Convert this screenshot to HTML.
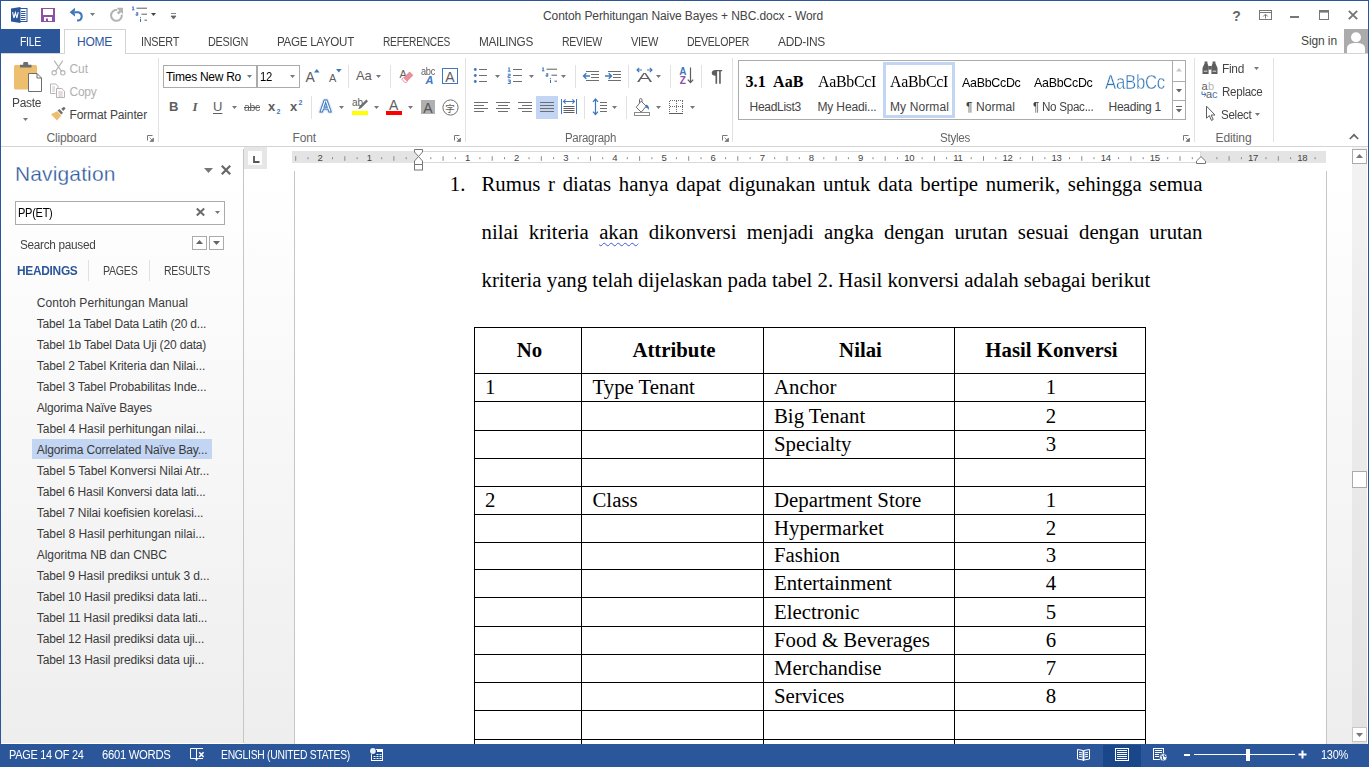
<!DOCTYPE html><html><head><meta charset="utf-8"><title>Contoh Perhitungan Naive Bayes + NBC.docx - Word</title><style>

html,body{margin:0;padding:0;background:#fff;}
body{width:1369px;height:767px;overflow:hidden;font-family:"Liberation Sans",sans-serif;}
#win{position:relative;width:1369px;height:767px;overflow:hidden;background:#fff;}
.a{position:absolute;}
.t{position:absolute;white-space:pre;height:24px;line-height:24px;font-size:12px;}
svg{overflow:visible;}
#doc{position:absolute;left:244px;top:147px;width:1108px;height:597px;overflow:hidden;background:linear-gradient(#ffffff 0px,#ffffff 30px,#eeeeee 596px);}
#page{position:absolute;left:50px;top:24px;width:1031px;height:700px;background:#fff;border-left:1px solid #c8c8c8;border-right:1px solid #c8c8c8;}
.dp{position:absolute;font-family:"Liberation Serif",serif;font-size:20.8px;color:#000;line-height:48px;white-space:nowrap;}
.dt{position:absolute;font-family:"Liberation Serif",serif;font-size:20.8px;color:#000;line-height:30px;height:30px;white-space:nowrap;}
table.tb{position:absolute;border-collapse:collapse;font-family:"Liberation Serif",serif;font-size:20.8px;color:#000;table-layout:fixed;}
table.tb td{border:1px solid #000;padding:0 0 0 10px;height:27.2px;line-height:27px;vertical-align:top;white-space:nowrap;overflow:hidden;}
table.tb td.c{text-align:center;padding:0;}
table.tb tr.h td{height:45px;line-height:45px;font-weight:bold;text-align:center;padding:0;}

</style></head><body><div id="win">
<div class="a" style="left:0px;top:0px;width:1369px;height:1px;background:#2b579a;"></div>
<div class="a" style="left:0px;top:0px;width:1px;height:767px;background:#2b579a;"></div>
<div class="a" style="left:1368px;top:0px;width:1px;height:767px;background:#2b579a;"></div>
<div class="a" style="left:1px;top:29px;width:59px;height:25px;background:#2b579a;"></div>
<div class="a" style="left:1px;top:53px;width:1367px;height:1px;background:#d4d4d4;"></div>
<div class="a" style="left:64px;top:29px;width:62px;height:25px;background:#fff;border:1px solid #d4d4d4;box-sizing:border-box;border-bottom:none;"></div>
<div class="a" style="left:1344px;top:29px;width:24px;height:24px;background:#ababab;"></div>
<div class="a" style="left:1px;top:146px;width:1367px;height:1px;background:#d4d4d4;"></div>
<div class="a" style="left:158px;top:58px;width:1px;height:84px;background:#e1e1e1;"></div>
<div class="a" style="left:465px;top:58px;width:1px;height:84px;background:#e1e1e1;"></div>
<div class="a" style="left:732px;top:58px;width:1px;height:84px;background:#e1e1e1;"></div>
<div class="a" style="left:1194px;top:58px;width:1px;height:84px;background:#e1e1e1;"></div>
<div class="a" style="left:1273px;top:58px;width:1px;height:84px;background:#e1e1e1;"></div>
<div class="a" style="left:163px;top:65px;width:94px;height:23px;background:#fff;border:1px solid #ababab;box-sizing:border-box;"></div>
<div class="a" style="left:257px;top:65px;width:43px;height:23px;background:#fff;border:1px solid #ababab;box-sizing:border-box;"></div>
<div class="a" style="left:348px;top:65px;width:1px;height:23px;background:#e1e1e1;"></div>
<div class="a" style="left:390px;top:65px;width:1px;height:23px;background:#e1e1e1;"></div>
<div class="a" style="left:311px;top:96px;width:1px;height:23px;background:#e1e1e1;"></div>
<div class="a" style="left:575px;top:65px;width:1px;height:23px;background:#e1e1e1;"></div>
<div class="a" style="left:628px;top:65px;width:1px;height:23px;background:#e1e1e1;"></div>
<div class="a" style="left:670px;top:65px;width:1px;height:23px;background:#e1e1e1;"></div>
<div class="a" style="left:701px;top:65px;width:1px;height:23px;background:#e1e1e1;"></div>
<div class="a" style="left:584px;top:96px;width:1px;height:23px;background:#e1e1e1;"></div>
<div class="a" style="left:626px;top:96px;width:1px;height:23px;background:#e1e1e1;"></div>
<div class="a" style="left:536px;top:96px;width:22px;height:23px;background:#c2d5f2;"></div>
<div class="a" style="left:738px;top:60px;width:448px;height:60px;background:#fff;border:1px solid #ababab;box-sizing:border-box;"></div>
<div class="a" style="left:1172px;top:60px;width:14px;height:60px;background:#fff;border:1px solid #ababab;box-sizing:border-box;"></div>
<div class="a" style="left:1172px;top:81px;width:14px;height:1px;background:#ababab;"></div>
<div class="a" style="left:1172px;top:100px;width:14px;height:1px;background:#ababab;"></div>
<div class="a" style="left:883px;top:62px;width:72px;height:56px;border:3px solid #c2d5f2;box-sizing:border-box;"></div>
<div class="a" style="left:1px;top:147px;width:242px;height:596px;background:linear-gradient(#ffffff 0px,#ffffff 30px,#eeeeee 596px);"></div>
<div class="a" style="left:243px;top:149px;width:1px;height:594px;background:#c6c6c6;"></div>
<div class="a" style="left:15px;top:201px;width:210px;height:24px;background:#fff;border:1px solid #ababab;box-sizing:border-box;"></div>
<div class="a" style="left:192px;top:236px;width:15px;height:14px;background:#fff;border:1px solid #ababab;box-sizing:border-box;"></div>
<div class="a" style="left:209px;top:236px;width:15px;height:14px;background:#fff;border:1px solid #ababab;box-sizing:border-box;"></div>
<div class="a" style="left:88px;top:260px;width:1px;height:21px;background:#e1e1e1;"></div>
<div class="a" style="left:149px;top:260px;width:1px;height:21px;background:#e1e1e1;"></div>
<div class="a" style="left:32px;top:439px;width:180px;height:20px;background:#c2d5f2;"></div>
<div id="doc"><div class="a" style="left:-244px;top:-147px;width:1369px;height:767px;"><div class="a" style="left:294px;top:171px;width:1033px;height:600px;background:#fff;border-left:1px solid #c6c6c6;border-right:1px solid #c6c6c6;box-sizing:border-box;"></div><div class="dp" style="left:449.8px;top:160px;">1.</div><div class="dp" style="left:481.5px;top:160px;width:721px;white-space:normal;text-align:justify;">Rumus r diatas hanya dapat digunakan untuk data bertipe numerik, sehingga semua nilai kriteria <span style="text-decoration:underline wavy #3c5ad8 1px;text-underline-offset:3px;">akan</span> dikonversi menjadi angka dengan urutan sesuai dengan urutan kriteria yang telah dijelaskan pada tabel 2. Hasil konversi adalah sebagai berikut</div><div class="a" style="left:474px;top:327px;width:672px;height:1px;background:#000;"></div><div class="a" style="left:474px;top:373px;width:672px;height:1px;background:#000;"></div><div class="a" style="left:474px;top:401px;width:672px;height:1px;background:#000;"></div><div class="a" style="left:474px;top:430px;width:672px;height:1px;background:#000;"></div><div class="a" style="left:474px;top:458px;width:672px;height:1px;background:#000;"></div><div class="a" style="left:474px;top:486px;width:672px;height:1px;background:#000;"></div><div class="a" style="left:474px;top:514px;width:672px;height:1px;background:#000;"></div><div class="a" style="left:474px;top:542px;width:672px;height:1px;background:#000;"></div><div class="a" style="left:474px;top:569px;width:672px;height:1px;background:#000;"></div><div class="a" style="left:474px;top:597px;width:672px;height:1px;background:#000;"></div><div class="a" style="left:474px;top:626px;width:672px;height:1px;background:#000;"></div><div class="a" style="left:474px;top:654px;width:672px;height:1px;background:#000;"></div><div class="a" style="left:474px;top:682px;width:672px;height:1px;background:#000;"></div><div class="a" style="left:474px;top:710px;width:672px;height:1px;background:#000;"></div><div class="a" style="left:474px;top:739px;width:672px;height:1px;background:#000;"></div><div class="a" style="left:474px;top:327px;width:1px;height:440px;background:#000;"></div><div class="a" style="left:581px;top:327px;width:1px;height:440px;background:#000;"></div><div class="a" style="left:763px;top:327px;width:1px;height:440px;background:#000;"></div><div class="a" style="left:954px;top:327px;width:1px;height:440px;background:#000;"></div><div class="a" style="left:1145px;top:327px;width:1px;height:440px;background:#000;"></div><div class="dt" style="left:476.5px;top:334.98px;width:106px;text-align:center;font-weight:bold;">No</div><div class="dt" style="left:583.5px;top:334.98px;width:181px;text-align:center;font-weight:bold;">Attribute</div><div class="dt" style="left:765.5px;top:334.98px;width:190px;text-align:center;font-weight:bold;">Nilai</div><div class="dt" style="left:956.5px;top:334.98px;width:190px;text-align:center;font-weight:bold;">Hasil Konversi</div><div class="dt" style="left:485px;top:371.98px;">1</div><div class="dt" style="left:592.5px;top:371.98px;">Type Tenant</div><div class="dt" style="left:774px;top:371.98px;">Anchor</div><div class="dt" style="left:956px;top:371.98px;width:190px;text-align:center;">1</div><div class="dt" style="left:774px;top:400.98px;">Big Tenant</div><div class="dt" style="left:956px;top:400.98px;width:190px;text-align:center;">2</div><div class="dt" style="left:774px;top:428.98px;">Specialty</div><div class="dt" style="left:956px;top:428.98px;width:190px;text-align:center;">3</div><div class="dt" style="left:485px;top:484.98px;">2</div><div class="dt" style="left:592.5px;top:484.98px;">Class</div><div class="dt" style="left:774px;top:484.98px;">Department Store</div><div class="dt" style="left:956px;top:484.98px;width:190px;text-align:center;">1</div><div class="dt" style="left:774px;top:512.98px;">Hypermarket</div><div class="dt" style="left:956px;top:512.98px;width:190px;text-align:center;">2</div><div class="dt" style="left:774px;top:539.98px;">Fashion</div><div class="dt" style="left:956px;top:539.98px;width:190px;text-align:center;">3</div><div class="dt" style="left:774px;top:567.98px;">Entertainment</div><div class="dt" style="left:956px;top:567.98px;width:190px;text-align:center;">4</div><div class="dt" style="left:774px;top:596.98px;">Electronic</div><div class="dt" style="left:956px;top:596.98px;width:190px;text-align:center;">5</div><div class="dt" style="left:774px;top:624.98px;">Food &amp; Beverages</div><div class="dt" style="left:956px;top:624.98px;width:190px;text-align:center;">6</div><div class="dt" style="left:774px;top:652.98px;">Merchandise</div><div class="dt" style="left:956px;top:652.98px;width:190px;text-align:center;">7</div><div class="dt" style="left:774px;top:680.98px;">Services</div><div class="dt" style="left:956px;top:680.98px;width:190px;text-align:center;">8</div></div></div>
<div class="a" style="left:292px;top:151px;width:1034px;height:12px;background:#e4e4e4;"></div>
<div class="a" style="left:418px;top:151px;width:783px;height:12px;background:#fff;border:1px solid #d9d9d9;box-sizing:border-box;"></div>
<div class="a" style="left:244px;top:147px;width:23px;height:22px;background:#e6e6e6;"></div>
<div class="a" style="left:248px;top:151px;width:14px;height:14px;background:#fdfdfd;"></div>
<div class="a" style="left:1352px;top:147px;width:15px;height:597px;background:linear-gradient(#f3f3f3,#e2e2e2);"></div>
<div class="a" style="left:1367px;top:147px;width:1px;height:597px;background:#fff;"></div>
<div class="a" style="left:1352px;top:149px;width:15px;height:15px;background:#fff;border:1px solid #ababab;box-sizing:border-box;"></div>
<div class="a" style="left:1352px;top:727px;width:15px;height:15px;background:#fff;border:1px solid #c6c6c6;box-sizing:border-box;"></div>
<div class="a" style="left:1352px;top:471px;width:15px;height:17px;background:#fff;border:1px solid #ababab;box-sizing:border-box;"></div>
<div class="a" style="left:0px;top:744px;width:1369px;height:23px;background:#2b579a;"></div>
<div class="a" style="left:1103px;top:745px;width:38px;height:22px;background:#19478a;"></div>
<div class="a" style="left:1290px;top:16px;width:9px;height:2px;background:#777;"></div>
<div class="a" style="left:442px;top:68px;width:16px;height:16px;background:#fff;border:1px solid #3f78bd;box-sizing:border-box;"></div>
<div class="a" style="left:352px;top:111px;width:16px;height:4px;background:#ffff00;"></div>
<div class="a" style="left:386px;top:111px;width:16px;height:4px;background:#ff0000;"></div>
<div class="a" style="left:421px;top:100px;width:14px;height:14px;background:#b0b0b0;"></div>
<div class="a" style="left:1184px;top:754px;width:6px;height:2px;background:#fff;"></div>
<div class="a" style="left:1194px;top:754px;width:101px;height:1px;background:#fff;"></div>
<div class="a" style="left:1246px;top:749px;width:4px;height:12px;background:#fff;"></div>
<div class="a" style="left:1243px;top:754px;width:2px;height:1px;background:#fff;"></div>
<span class="t" style="left:543px;top:3.84px;font-size:12px;color:#444;letter-spacing:-0.089px;">Contoh Perhitungan Naive Bayes + NBC.docx - Word</span>
<span class="t" style="left:20px;top:29.84px;font-size:12px;color:#fff;letter-spacing:-0.300px;transform:scaleX(0.8698);transform-origin:0 0;">FILE</span>
<span class="t" style="left:77px;top:29.84px;font-size:12px;color:#2b579a;letter-spacing:-0.250px;">HOME</span>
<span class="t" style="left:141px;top:29.84px;font-size:12px;color:#444444;letter-spacing:-0.300px;transform:scaleX(0.9048);transform-origin:0 0;">INSERT</span>
<span class="t" style="left:208px;top:29.84px;font-size:12px;color:#444444;letter-spacing:-0.300px;transform:scaleX(0.9047);transform-origin:0 0;">DESIGN</span>
<span class="t" style="left:277px;top:29.84px;font-size:12px;color:#444444;letter-spacing:-0.300px;transform:scaleX(0.9671);transform-origin:0 0;">PAGE LAYOUT</span>
<span class="t" style="left:383px;top:29.84px;font-size:12px;color:#444444;letter-spacing:-0.300px;transform:scaleX(0.8479);transform-origin:0 0;">REFERENCES</span>
<span class="t" style="left:479px;top:29.84px;font-size:12px;color:#444444;letter-spacing:-0.300px;transform:scaleX(0.9825);transform-origin:0 0;">MAILINGS</span>
<span class="t" style="left:562px;top:29.84px;font-size:12px;color:#444444;letter-spacing:-0.300px;transform:scaleX(0.8783);transform-origin:0 0;">REVIEW</span>
<span class="t" style="left:631px;top:29.84px;font-size:12px;color:#444444;letter-spacing:-0.300px;transform:scaleX(0.9161);transform-origin:0 0;">VIEW</span>
<span class="t" style="left:687px;top:29.84px;font-size:12px;color:#444444;letter-spacing:-0.300px;transform:scaleX(0.8774);transform-origin:0 0;">DEVELOPER</span>
<span class="t" style="left:778px;top:29.84px;font-size:12px;color:#444444;letter-spacing:-0.300px;transform:scaleX(0.9948);transform-origin:0 0;">ADD-INS</span>
<span class="t" style="left:1301px;top:29.34px;font-size:12px;color:#444;letter-spacing:-0.100px;">Sign in</span>
<span class="t" style="left:12px;top:91.34px;font-size:12px;color:#444;letter-spacing:-0.300px;transform:scaleX(0.9936);transform-origin:0 0;">Paste</span>
<span class="t" style="left:69.5px;top:57.34px;font-size:12px;color:#b0b0b0;letter-spacing:-0.062px;">Cut</span>
<span class="t" style="left:69.5px;top:80.34px;font-size:12px;color:#b0b0b0;letter-spacing:-0.254px;">Copy</span>
<span class="t" style="left:69.5px;top:103.34px;font-size:12px;color:#444;letter-spacing:-0.133px;">Format Painter</span>
<span class="t" style="left:46.5px;top:125.84px;font-size:12px;color:#666;letter-spacing:-0.153px;">Clipboard</span>
<span class="t" style="left:292.5px;top:125.84px;font-size:12px;color:#666;letter-spacing:-0.129px;">Font</span>
<span class="t" style="left:565px;top:125.84px;font-size:12px;color:#666;letter-spacing:-0.300px;transform:scaleX(0.9560);transform-origin:0 0;">Paragraph</span>
<span class="t" style="left:940px;top:125.84px;font-size:12px;color:#666;letter-spacing:-0.300px;transform:scaleX(0.9713);transform-origin:0 0;">Styles</span>
<span class="t" style="left:1215.5px;top:125.84px;font-size:12px;color:#666;letter-spacing:-0.100px;">Editing</span>
<span class="t" style="left:166px;top:64.84px;font-size:12px;color:#000;letter-spacing:-0.270px;">Times New Ro</span>
<span class="t" style="left:260px;top:64.84px;font-size:12px;color:#000;letter-spacing:-0.300px;transform:scaleX(0.9405);transform-origin:0 0;">12</span>
<span class="t" style="left:745.5px;top:69.60px;font-size:16px;color:#000;font-family:'Liberation Serif', serif;font-weight:bold;letter-spacing:0.082px;">3.1  AaB</span>
<span class="t" style="left:749.5px;top:94.84px;font-size:12px;color:#444;letter-spacing:-0.283px;">HeadList3</span>
<span class="t" style="left:818px;top:69.60px;font-size:16px;color:#000;font-family:'Liberation Serif', serif;letter-spacing:-0.300px;transform:scaleX(0.9942);transform-origin:0 0;">AaBbCcI</span>
<span class="t" style="left:817.5px;top:94.84px;font-size:12px;color:#444;letter-spacing:-0.153px;">My Headi...</span>
<span class="t" style="left:890px;top:69.60px;font-size:16px;color:#000;font-family:'Liberation Serif', serif;letter-spacing:-0.300px;transform:scaleX(0.9942);transform-origin:0 0;">AaBbCcI</span>
<span class="t" style="left:890px;top:94.84px;font-size:12px;color:#444;letter-spacing:0.109px;">My Normal</span>
<span class="t" style="left:961.5px;top:70.50px;font-size:13px;color:#000;letter-spacing:-0.300px;transform:scaleX(0.9562);transform-origin:0 0;">AaBbCcDc</span>
<span class="t" style="left:966px;top:94.84px;font-size:12px;color:#444;letter-spacing:0.068px;">¶ Normal</span>
<span class="t" style="left:1033.5px;top:70.50px;font-size:13px;color:#000;letter-spacing:-0.300px;transform:scaleX(0.9562);transform-origin:0 0;">AaBbCcDc</span>
<span class="t" style="left:1032.5px;top:94.84px;font-size:12px;color:#444;letter-spacing:-0.300px;transform:scaleX(0.9725);transform-origin:0 0;">¶ No Spac...</span>
<span class="t" style="left:1105px;top:69.57px;font-size:20px;color:#2e74b5;letter-spacing:-0.300px;transform:scaleX(0.8383);transform-origin:0 0;-webkit-text-stroke:0.45px #fff;">AaBbCc</span>
<span class="t" style="left:1108.5px;top:94.84px;font-size:12px;color:#444;letter-spacing:-0.247px;">Heading 1</span>
<span class="t" style="left:1221.5px;top:57.34px;font-size:12px;color:#444;letter-spacing:-0.300px;transform:scaleX(0.9935);transform-origin:0 0;">Find</span>
<span class="t" style="left:1221.5px;top:80.34px;font-size:12px;color:#444;letter-spacing:-0.300px;transform:scaleX(0.9659);transform-origin:0 0;">Replace</span>
<span class="t" style="left:1221px;top:103.34px;font-size:12px;color:#444;letter-spacing:-0.300px;transform:scaleX(0.9664);transform-origin:0 0;">Select</span>
<span class="t" style="left:15px;top:162.22px;font-size:21px;color:#2b579a;letter-spacing:0.127px;-webkit-text-stroke:0.3px #fff;">Navigation</span>
<span class="t" style="left:18px;top:200.84px;font-size:12px;color:#000;letter-spacing:-0.300px;transform:scaleX(0.9189);transform-origin:0 0;">PP(ET)</span>
<span class="t" style="left:20px;top:232.84px;font-size:12px;color:#444;letter-spacing:-0.300px;transform:scaleX(0.9826);transform-origin:0 0;">Search paused</span>
<span class="t" style="left:16.5px;top:258.84px;font-size:12px;color:#2b579a;font-weight:bold;letter-spacing:-0.300px;transform:scaleX(0.9927);transform-origin:0 0;">HEADINGS</span>
<span class="t" style="left:102.5px;top:258.84px;font-size:12px;color:#444;letter-spacing:-0.300px;transform:scaleX(0.8853);transform-origin:0 0;">PAGES</span>
<span class="t" style="left:164px;top:258.84px;font-size:12px;color:#444;letter-spacing:-0.300px;transform:scaleX(0.8784);transform-origin:0 0;">RESULTS</span>
<span class="t" style="left:36.8px;top:290.84px;font-size:12px;color:#3a3a3a;letter-spacing:0.070px;">Contoh Perhitungan Manual</span>
<span class="t" style="left:36.8px;top:311.84px;font-size:12px;color:#3a3a3a;letter-spacing:-0.191px;">Tabel 1a Tabel Data Latih (20 d...</span>
<span class="t" style="left:36.8px;top:332.84px;font-size:12px;color:#3a3a3a;letter-spacing:-0.156px;">Tabel 1b Tabel Data Uji (20 data)</span>
<span class="t" style="left:36.8px;top:353.84px;font-size:12px;color:#3a3a3a;letter-spacing:-0.099px;">Tabel 2 Tabel Kriteria dan Nilai...</span>
<span class="t" style="left:36.8px;top:374.84px;font-size:12px;color:#3a3a3a;letter-spacing:-0.104px;">Tabel 3 Tabel Probabilitas Inde...</span>
<span class="t" style="left:36.8px;top:395.84px;font-size:12px;color:#3a3a3a;letter-spacing:-0.191px;">Algorima Naïve Bayes</span>
<span class="t" style="left:36.8px;top:416.84px;font-size:12px;color:#3a3a3a;letter-spacing:-0.041px;">Tabel 4 Hasil perhitungan nilai...</span>
<span class="t" style="left:36.8px;top:437.84px;font-size:12px;color:#3a3a3a;letter-spacing:-0.119px;">Algorima Correlated Naïve Bay...</span>
<span class="t" style="left:36.8px;top:458.84px;font-size:12px;color:#3a3a3a;letter-spacing:-0.056px;">Tabel 5 Tabel Konversi Nilai Atr...</span>
<span class="t" style="left:36.8px;top:479.84px;font-size:12px;color:#3a3a3a;letter-spacing:-0.154px;">Tabel 6 Hasil Konversi data lati...</span>
<span class="t" style="left:36.8px;top:500.84px;font-size:12px;color:#3a3a3a;letter-spacing:-0.121px;">Tabel 7 Nilai koefisien korelasi...</span>
<span class="t" style="left:36.8px;top:521.84px;font-size:12px;color:#3a3a3a;letter-spacing:-0.053px;">Tabel 8 Hasil perhitungan nilai...</span>
<span class="t" style="left:36.8px;top:542.84px;font-size:12px;color:#3a3a3a;letter-spacing:-0.061px;">Algoritma NB dan CNBC</span>
<span class="t" style="left:36.8px;top:563.84px;font-size:12px;color:#3a3a3a;letter-spacing:-0.097px;">Tabel 9 Hasil prediksi untuk 3 d...</span>
<span class="t" style="left:36.8px;top:584.84px;font-size:12px;color:#3a3a3a;letter-spacing:-0.137px;">Tabel 10 Hasil prediksi data lati...</span>
<span class="t" style="left:36.8px;top:605.84px;font-size:12px;color:#3a3a3a;letter-spacing:-0.112px;">Tabel 11 Hasil prediksi data lati...</span>
<span class="t" style="left:36.8px;top:626.84px;font-size:12px;color:#3a3a3a;letter-spacing:-0.134px;">Tabel 12 Hasil prediksi data uji...</span>
<span class="t" style="left:36.8px;top:647.84px;font-size:12px;color:#3a3a3a;letter-spacing:-0.134px;">Tabel 13 Hasil prediksi data uji...</span>
<span class="t" style="left:317.54px;top:145.71px;font-size:9.5px;color:#444;letter-spacing:-0.3px;">2</span>
<span class="t" style="left:366.67px;top:145.71px;font-size:9.5px;color:#444;letter-spacing:-0.3px;">1</span>
<span class="t" style="left:464.93px;top:145.71px;font-size:9.5px;color:#444;letter-spacing:-0.3px;">1</span>
<span class="t" style="left:514.06px;top:145.71px;font-size:9.5px;color:#444;letter-spacing:-0.3px;">2</span>
<span class="t" style="left:563.1899999999999px;top:145.71px;font-size:9.5px;color:#444;letter-spacing:-0.3px;">3</span>
<span class="t" style="left:612.3199999999999px;top:145.71px;font-size:9.5px;color:#444;letter-spacing:-0.3px;">4</span>
<span class="t" style="left:661.4499999999999px;top:145.71px;font-size:9.5px;color:#444;letter-spacing:-0.3px;">5</span>
<span class="t" style="left:710.5799999999999px;top:145.71px;font-size:9.5px;color:#444;letter-spacing:-0.3px;">6</span>
<span class="t" style="left:759.71px;top:145.71px;font-size:9.5px;color:#444;letter-spacing:-0.3px;">7</span>
<span class="t" style="left:808.8399999999999px;top:145.71px;font-size:9.5px;color:#444;letter-spacing:-0.3px;">8</span>
<span class="t" style="left:857.97px;top:145.71px;font-size:9.5px;color:#444;letter-spacing:-0.3px;">9</span>
<span class="t" style="left:904.1999999999999px;top:145.71px;font-size:9.5px;color:#444;letter-spacing:-0.3px;">10</span>
<span class="t" style="left:953.33px;top:145.71px;font-size:9.5px;color:#444;letter-spacing:-0.3px;">11</span>
<span class="t" style="left:1002.46px;top:145.71px;font-size:9.5px;color:#444;letter-spacing:-0.3px;">12</span>
<span class="t" style="left:1051.5900000000001px;top:145.71px;font-size:9.5px;color:#444;letter-spacing:-0.3px;">13</span>
<span class="t" style="left:1100.7200000000003px;top:145.71px;font-size:9.5px;color:#444;letter-spacing:-0.3px;">14</span>
<span class="t" style="left:1149.8500000000001px;top:145.71px;font-size:9.5px;color:#444;letter-spacing:-0.3px;">15</span>
<span class="t" style="left:1248.1100000000001px;top:145.71px;font-size:9.5px;color:#444;letter-spacing:-0.3px;">17</span>
<span class="t" style="left:1297.2400000000002px;top:145.71px;font-size:9.5px;color:#444;letter-spacing:-0.3px;">18</span>
<span class="t" style="left:8.5px;top:743.34px;font-size:12px;color:#fff;letter-spacing:-0.300px;transform:scaleX(0.9093);transform-origin:0 0;">PAGE 14 OF 24</span>
<span class="t" style="left:101.5px;top:743.34px;font-size:12px;color:#fff;letter-spacing:-0.300px;transform:scaleX(0.9380);transform-origin:0 0;">6601 WORDS</span>
<span class="t" style="left:221px;top:743.34px;font-size:12px;color:#fff;letter-spacing:-0.300px;transform:scaleX(0.8600);transform-origin:0 0;">ENGLISH (UNITED STATES)</span>
<span class="t" style="left:1321px;top:743.34px;font-size:12px;color:#fff;letter-spacing:-0.300px;transform:scaleX(0.9152);transform-origin:0 0;">130%</span>
<span class="t" style="left:1232.2px;top:3.65px;font-size:14px;color:#666;font-weight:bold;">?</span>
<span class="t" style="left:305.5px;top:65.15px;font-size:14px;color:#5e5e5e;">A</span>
<span class="t" style="left:329px;top:66.19px;font-size:11px;color:#5e5e5e;">A</span>
<span class="t" style="left:356px;top:64.00px;font-size:13px;color:#5e5e5e;letter-spacing:-0.203px;">Aa</span>
<span class="t" style="left:399.5px;top:62.19px;font-size:11px;color:#5e5e5e;">A</span>
<span class="t" style="left:420.5px;top:59.53px;font-size:10px;color:#5e5e5e;letter-spacing:-0.300px;transform:scaleX(0.9195);transform-origin:0 0;">abc</span>
<span class="t" style="left:425.5px;top:68.19px;font-size:11px;color:#3f78bd;font-weight:bold;font-style:italic;">A</span>
<span class="t" style="left:445.2px;top:65.15px;font-size:14px;color:#5e5e5e;">A</span>
<span class="t" style="left:169px;top:95.00px;font-size:13px;color:#5e5e5e;font-weight:bold;">B</span>
<span class="t" style="left:192.5px;top:95.11px;font-size:13px;color:#5e5e5e;font-family:'Liberation Serif', serif;font-weight:bold;font-style:italic;">I</span>
<span class="t" style="left:213px;top:94.50px;font-size:13px;color:#5e5e5e;text-decoration:underline;text-underline-offset:1.5px;">U</span>
<span class="t" style="left:244px;top:94.69px;font-size:11px;color:#5e5e5e;letter-spacing:-0.300px;transform:scaleX(0.9496);transform-origin:0 0;text-decoration:line-through;">abc</span>
<span class="t" style="left:268px;top:95.00px;font-size:13px;color:#5e5e5e;font-weight:bold;">x</span>
<span class="t" style="left:276.5px;top:100.07px;font-size:7px;color:#3f78bd;font-weight:bold;">2</span>
<span class="t" style="left:290px;top:95.00px;font-size:13px;color:#5e5e5e;font-weight:bold;">x</span>
<span class="t" style="left:298.5px;top:91.07px;font-size:7px;color:#3f78bd;font-weight:bold;">2</span>
<span class="t" style="left:352px;top:91.03px;font-size:10px;color:#5e5e5e;">ab</span>
<span class="t" style="left:389px;top:93.15px;font-size:14px;color:#5e5e5e;">A</span>
<span class="t" style="left:423.3px;top:95.65px;font-size:14px;color:#555;">A</span>
<span class="t" style="left:445.2px;top:95.91px;font-size:9.5px;color:#5e5e5e;font-family:'Noto Sans CJK SC','WenQuanYi Zen Hei',sans-serif;">字</span>
<span class="t" style="left:636.5px;top:65.50px;font-size:13px;color:#5e5e5e;letter-spacing:0.500px;transform:scaleX(1.7445);transform-origin:0 0;">A</span>
<span class="t" style="left:679.3px;top:60.03px;font-size:10px;color:#3f78bd;font-weight:bold;">A</span>
<span class="t" style="left:679.8px;top:68.53px;font-size:10px;color:#8c50a6;font-weight:bold;">Z</span>
<span class="t" style="left:710.5px;top:64.96px;font-size:16px;color:#5e5e5e;font-weight:bold;letter-spacing:0.500px;transform:scaleX(1.3289);transform-origin:0 0;">¶</span>
<span class="t" style="left:1201.5px;top:74.19px;font-size:11px;color:#5e5e5e;">a</span>
<span class="t" style="left:1208px;top:74.19px;font-size:11px;color:#b4b4b4;">b</span>
<span class="t" style="left:1206px;top:81.69px;font-size:11px;color:#5e5e5e;">a</span>
<span class="t" style="left:1212px;top:81.69px;font-size:11px;color:#3f78bd;">c</span>
<svg class="a" style="left:10px;top:6px;" width="18" height="18" viewBox="0 0 18 18">
<rect x="9" y="2.5" width="8" height="13" fill="#fff" stroke="#2b579a" stroke-width="1"/>
<path d="M11 5.5h4.5M11 7.5h4.5M11 9.5h4.5M11 11.5h4.5M11 13.5h4.5" stroke="#2b579a" stroke-width="1"/>
<path d="M1 2.6L10.5 1V17L1 15.4Z" fill="#2b579a"/>
<path d="M2.6 6.2l1.3 5.8l1.5-5.2l1.5 5.2l1.3-5.8" fill="none" stroke="#fff" stroke-width="1.1"/>
</svg>
<svg class="a" style="left:41px;top:8px;" width="14" height="14" viewBox="0 0 14 14">
<path d="M0 0H14V14H0Z" fill="#8c50a6"/>
<rect x="2" y="1" width="10" height="6" fill="#fff"/>
<rect x="3" y="9" width="8" height="4" fill="#fff"/>
<rect x="5" y="10.5" width="2" height="2.5" fill="#8c50a6"/>
</svg>
<svg class="a" style="left:69px;top:7px;" width="16" height="15" viewBox="0 0 16 15">
<path d="M2.2 5.2H9.5A4.3 4.3 0 0 1 9.2 13.6H8" fill="none" stroke="#3f78bd" stroke-width="2"/>
<path d="M0.6 5.2L6 0.8V3.6L4 5.2L6 6.8V9.6Z" fill="#3f78bd"/>
</svg>
<svg class="a" style="left:90.0px;top:12.7px;" width="5" height="3" viewBox="0 0 5 3"><path d="M0 0H5L2.5 3Z" fill="#777"/></svg>
<svg class="a" style="left:109px;top:7px;" width="15" height="15" viewBox="0 0 15 15">
<path d="M8.2 3A5.4 5.4 0 1 0 12.8 7.6" fill="none" stroke="#b4b4b4" stroke-width="2.1"/>
<path d="M7.6 0.8H14V7.2L12 5.2L9.6 7.6L7.8 5.8L10.2 3.4Z" fill="#b4b4b4"/>
</svg>
<svg class="a" style="left:131px;top:6.3px;" width="17" height="17" viewBox="0 0 17 17">
<path d="M1.2 1.3L2.2 0.6V3.8M1 3.8H3.4" fill="none" stroke="#3a6fb5" stroke-width="1"/>
<path d="M5.2 6.6H6.8V9.3H5.1V7.9H6.8" fill="none" stroke="#3a6fb5" stroke-width="0.9"/>
<path d="M9.5 11V11.9M9.5 12.8V16" fill="none" stroke="#3a6fb5" stroke-width="1"/>
<path d="M5.5 2.2H16M10.5 8.2H16M13.5 14.2H16" stroke="#5e5e5e" stroke-width="1"/>
</svg>
<svg class="a" style="left:151.0px;top:12.7px;" width="5" height="3" viewBox="0 0 5 3"><path d="M0 0H5L2.5 3Z" fill="#444"/></svg>
<svg class="a" style="left:171px;top:13px;" width="6" height="7" viewBox="0 0 6 7"><path d="M0 0.5H5M0 3H5L2.5 6Z" fill="#666" stroke="#666" stroke-width="0.8"/></svg>
<svg class="a" style="left:1259px;top:10px;" width="14" height="11" viewBox="0 0 14 11"><rect x="0.5" y="0.5" width="12" height="9" fill="none" stroke="#777" stroke-width="1"/>
<path d="M0.5 2.5H12.5" stroke="#777"/><path d="M6.5 8.5V4.5M4.2 6.5L6.5 4.2L8.8 6.5" fill="none" stroke="#777" stroke-width="1"/></svg>
<svg class="a" style="left:1319px;top:10px;" width="10" height="10" viewBox="0 0 10 10"><rect x="0.5" y="0.5" width="9" height="9" fill="none" stroke="#777" stroke-width="1"/><rect x="0" y="0" width="10" height="2.6" fill="#777"/></svg>
<svg class="a" style="left:1348px;top:10px;" width="10" height="10" viewBox="0 0 10 10"><path d="M0.8 0.8L9.2 9.2M9.2 0.8L0.8 9.2" stroke="#777" stroke-width="1.9"/></svg>
<svg class="a" style="left:1344px;top:29px;" width="24" height="24" viewBox="0 0 24 24"><circle cx="12" cy="8.2" r="5" fill="#fff"/><path d="M3 24V19.5C3 15.5 6.5 14 12 14S21 15.5 21 19.5V24Z" fill="#fff"/></svg>
<svg class="a" style="left:1349px;top:133px;" width="10" height="7" viewBox="0 0 10 7"><path d="M0.8 6L5 1.8L9.2 6" fill="none" stroke="#666" stroke-width="1.7"/></svg>
<svg class="a" style="left:13px;top:61px;" width="30" height="32" viewBox="0 0 30 32">
<rect x="1" y="4" width="23" height="24.5" rx="1.5" fill="#ecbe6e"/>
<path d="M7 6.5V3.8H10.2V2.2A1.2 1.2 0 0 1 11.4 1H14A1.2 1.2 0 0 1 15.2 2.2V3.8H18.5V6.5Z" fill="#6e6e6e"/>
<path d="M15.5 12.5H24L28.5 17V30.5H15.5Z" fill="#fff" stroke="#6e6e6e" stroke-width="1"/>
<path d="M24 12.5V17H28.5" fill="none" stroke="#6e6e6e" stroke-width="1"/>
</svg>
<svg class="a" style="left:23.0px;top:117.5px;" width="5" height="3" viewBox="0 0 5 3"><path d="M0 0H5L2.5 3Z" fill="#777"/></svg>
<svg class="a" style="left:51px;top:60px;" width="15" height="16" viewBox="0 0 15 16">
<path d="M3.2 0.6L10.6 11.5M11.8 0.6L4.4 11.5" stroke="#b4b4b4" stroke-width="1.2" fill="none"/>
<circle cx="3.2" cy="12.8" r="2.2" fill="none" stroke="#b4b4b4" stroke-width="1.1"/>
<circle cx="11.8" cy="12.8" r="2.2" fill="none" stroke="#b4b4b4" stroke-width="1.1"/>
</svg>
<svg class="a" style="left:50px;top:83px;" width="16" height="16" viewBox="0 0 16 16">
<path d="M0.5 1H5.8L8 3.2V5.4M0.5 1V10.5H5.5" fill="none" stroke="#b4b4b4" stroke-width="1"/>
<path d="M2.2 4H5M2.2 6H5M2.2 8H5" stroke="#c4c4c4" stroke-width="1"/>
<path d="M6.5 5.5H11.8L14.5 8.2V14.5H6.5Z" fill="#fff" stroke="#b4b4b4" stroke-width="1"/>
<path d="M8.3 9H12.7M8.3 11H12.7M8.3 13H12.7" stroke="#c9b4c4" stroke-width="1"/>
</svg>
<svg class="a" style="left:50px;top:106px;" width="17" height="16" viewBox="0 0 17 16">
<path d="M1 8.2L7.2 5.2L11.2 9.6L7 14.6Z" fill="#ecbe6e"/>
<path d="M7.6 4.6L9.4 2.9L13 6.8L11.3 8.6Z" fill="#6e6e6e"/>
<path d="M11.2 2.8L14 0.8L15.6 2.6L13.2 5Z" fill="#6e6e6e"/>
</svg>
<svg class="a" style="left:147px;top:135px;" width="6.5" height="6.5" viewBox="0 0 6.5 6.5"><path d="M0.5 5.5V0.5H5.5" fill="none" stroke="#777" stroke-width="1"/><path d="M2.6 2.6L6 6M6.5 3V6.5H3Z" fill="#777" stroke="#777" stroke-width="0.8"/></svg>
<svg class="a" style="left:454px;top:135px;" width="6.5" height="6.5" viewBox="0 0 6.5 6.5"><path d="M0.5 5.5V0.5H5.5" fill="none" stroke="#777" stroke-width="1"/><path d="M2.6 2.6L6 6M6.5 3V6.5H3Z" fill="#777" stroke="#777" stroke-width="0.8"/></svg>
<svg class="a" style="left:721.5px;top:135px;" width="6.5" height="6.5" viewBox="0 0 6.5 6.5"><path d="M0.5 5.5V0.5H5.5" fill="none" stroke="#777" stroke-width="1"/><path d="M2.6 2.6L6 6M6.5 3V6.5H3Z" fill="#777" stroke="#777" stroke-width="0.8"/></svg>
<svg class="a" style="left:1183px;top:135px;" width="6.5" height="6.5" viewBox="0 0 6.5 6.5"><path d="M0.5 5.5V0.5H5.5" fill="none" stroke="#777" stroke-width="1"/><path d="M2.6 2.6L6 6M6.5 3V6.5H3Z" fill="#777" stroke="#777" stroke-width="0.8"/></svg>
<svg class="a" style="left:247.0px;top:75.0px;" width="5" height="3" viewBox="0 0 5 3"><path d="M0 0H5L2.5 3Z" fill="#777"/></svg>
<svg class="a" style="left:290.0px;top:75.0px;" width="5" height="3" viewBox="0 0 5 3"><path d="M0 0H5L2.5 3Z" fill="#777"/></svg>
<svg class="a" style="left:313.5px;top:68.5px;" width="6" height="4" viewBox="0 0 6 4"><path d="M0 3.5L2.8 0L5.6 3.5Z" fill="#3f78bd"/></svg>
<svg class="a" style="left:335.5px;top:68.8px;" width="6" height="4" viewBox="0 0 6 4"><path d="M0 0H5.6L2.8 3.5Z" fill="#3f78bd"/></svg>
<svg class="a" style="left:376.0px;top:75.0px;" width="5" height="3" viewBox="0 0 5 3"><path d="M0 0H5L2.5 3Z" fill="#777"/></svg>
<svg class="a" style="left:400px;top:70px;" width="16" height="14" viewBox="0 0 16 14"><path d="M1.8 9.2L9.6 1.4L13.4 5.2L5.6 13Z" fill="#e8909c"/><path d="M1.8 9.2L3.4 7.6L7.2 11.4L5.6 13Z" fill="#fff" stroke="#e8909c" stroke-width="0.9"/></svg>
<svg class="a" style="left:232.0px;top:106.0px;" width="5" height="3" viewBox="0 0 5 3"><path d="M0 0H5L2.5 3Z" fill="#777"/></svg>
<svg class="a" style="left:319px;top:98px;" width="16" height="16" viewBox="0 0 16 16"><text x="0.6" y="13.6" font-family="Liberation Sans, sans-serif" font-size="17" font-weight="bold" fill="#fff" stroke="#3f78bd" stroke-width="0.9" style="filter:drop-shadow(0 0 0.9px #8fb0dc)">A</text></svg>
<svg class="a" style="left:339.0px;top:106.0px;" width="5" height="3" viewBox="0 0 5 3"><path d="M0 0H5L2.5 3Z" fill="#777"/></svg>
<svg class="a" style="left:356px;top:99px;" width="13" height="11" viewBox="0 0 13 11"><path d="M2.2 10.2L3.4 7.4L10.4 0.6L12 2.2L5 9.2Z" fill="#6e6e6e"/></svg>
<svg class="a" style="left:374.0px;top:106.0px;" width="5" height="3" viewBox="0 0 5 3"><path d="M0 0H5L2.5 3Z" fill="#777"/></svg>
<svg class="a" style="left:408.0px;top:106.0px;" width="5" height="3" viewBox="0 0 5 3"><path d="M0 0H5L2.5 3Z" fill="#777"/></svg>
<svg class="a" style="left:441.5px;top:98.5px;" width="17" height="17" viewBox="0 0 17 17"><circle cx="8.5" cy="8.5" r="7.6" fill="none" stroke="#6e6e6e" stroke-width="1"/></svg>
<svg class="a" style="left:473px;top:67px;" width="16" height="17" viewBox="0 0 16 17"><circle cx="2.3" cy="2.5" r="1.4" fill="#3f78bd"/><circle cx="2.3" cy="8.5" r="1.4" fill="#3f78bd"/><circle cx="2.3" cy="14.5" r="1.4" fill="#3f78bd"/><path d="M6 2.5H14M6 8.5H14M6 14.5H14" stroke="#6e6e6e" stroke-width="1"/></svg>
<svg class="a" style="left:495.0px;top:75.0px;" width="5" height="3" viewBox="0 0 5 3"><path d="M0 0H5L2.5 3Z" fill="#777"/></svg>
<svg class="a" style="left:506px;top:66px;" width="18" height="19" viewBox="0 0 18 19"><path d="M2.2 2.4L3.2 1.6V5.2M1.8 5.2H4.6" fill="none" stroke="#3f78bd" stroke-width="1"/>
<path d="M1.8 8.2H4.2V9.8H2V11.6H4.6" fill="none" stroke="#3f78bd" stroke-width="1"/>
<path d="M1.8 14H4.3V15.7H2.6M4.3 15.7V17.5H1.8" fill="none" stroke="#3f78bd" stroke-width="1"/>
<path d="M7 3.5H16M7 9.5H16M7 15.5H16" stroke="#6e6e6e" stroke-width="1"/></svg>
<svg class="a" style="left:529.0px;top:75.0px;" width="5" height="3" viewBox="0 0 5 3"><path d="M0 0H5L2.5 3Z" fill="#777"/></svg>
<svg class="a" style="left:540.5px;top:67.3px;" width="17" height="17" viewBox="0 0 17 17">
<path d="M1.2 1.3L2.2 0.6V3.8M1 3.8H3.4" fill="none" stroke="#3a6fb5" stroke-width="1"/>
<path d="M5.2 6.6H6.8V9.3H5.1V7.9H6.8" fill="none" stroke="#3a6fb5" stroke-width="0.9"/>
<path d="M9.5 11V11.9M9.5 12.8V16" fill="none" stroke="#3a6fb5" stroke-width="1"/>
<path d="M5.5 2.2H16M10.5 8.2H16M13.5 14.2H16" stroke="#5e5e5e" stroke-width="1"/>
</svg>
<svg class="a" style="left:561.0px;top:75.0px;" width="5" height="3" viewBox="0 0 5 3"><path d="M0 0H5L2.5 3Z" fill="#777"/></svg>
<svg class="a" style="left:583px;top:70px;" width="17" height="12" viewBox="0 0 17 12"><path d="M3 1.5H16M8 4.5H16M8 7.5H16M3 10.5H16" stroke="#6e6e6e" stroke-width="1"/>
<path d="M0.5 6H7M3.3 3.2L0.5 6L3.3 8.8" fill="none" stroke="#3f78bd" stroke-width="1.4"/></svg>
<svg class="a" style="left:605px;top:70px;" width="17" height="12" viewBox="0 0 17 12"><path d="M3 1.5H16M8 4.5H16M8 7.5H16M3 10.5H16" stroke="#6e6e6e" stroke-width="1"/>
<path d="M0 6H6.5M3.7 3.2L6.5 6L3.7 8.8" fill="none" stroke="#3f78bd" stroke-width="1.4"/></svg>
<svg class="a" style="left:636px;top:67px;" width="17" height="6" viewBox="0 0 17 6"><path d="M1 3H6M3.2 0.8L1 3L3.2 5.2M11 3H16M13.8 0.8L16 3L13.8 5.2" fill="none" stroke="#3f78bd" stroke-width="1.2"/></svg>
<svg class="a" style="left:656.0px;top:75.0px;" width="5" height="3" viewBox="0 0 5 3"><path d="M0 0H5L2.5 3Z" fill="#777"/></svg>
<svg class="a" style="left:687px;top:67px;" width="8" height="17" viewBox="0 0 8 17"><path d="M3.5 0.5V15.5M0.8 12.6L3.5 15.5L6.2 12.6" fill="none" stroke="#5e5e5e" stroke-width="1.2"/></svg>
<svg class="a" style="left:474px;top:96px;" width="20" height="20" viewBox="0 0 20 20"><path d="M0 6.5H14M0 9.5H10M0 12.5H14M0 15.5H10" stroke="#6e6e6e" stroke-width="1" fill="none"/></svg>
<svg class="a" style="left:496px;top:96px;" width="20" height="20" viewBox="0 0 20 20"><path d="M0 6.5H14M2 9.5H12M0 12.5H14M2 15.5H12" stroke="#6e6e6e" stroke-width="1" fill="none"/></svg>
<svg class="a" style="left:518px;top:96px;" width="20" height="20" viewBox="0 0 20 20"><path d="M0 6.5H14M4 9.5H14M0 12.5H14M4 15.5H14" stroke="#6e6e6e" stroke-width="1" fill="none"/></svg>
<svg class="a" style="left:540px;top:96px;" width="20" height="20" viewBox="0 0 20 20"><path d="M0 6.5H14M0 9.5H14M0 12.5H14M0 15.5H14" stroke="#6e6e6e" stroke-width="1" fill="none"/></svg>
<svg class="a" style="left:561px;top:98px;" width="17" height="17" viewBox="0 0 17 17"><path d="M0.5 1V16M15.5 1V16" stroke="#3f78bd" stroke-width="1"/>
<path d="M2.5 3.5H13.5M4.6 1.4L2.5 3.5L4.6 5.6M11.4 1.4L13.5 3.5L11.4 5.6" fill="none" stroke="#3f78bd" stroke-width="1.1"/>
<path d="M2.5 8.5H13.5M2.5 10.5H13.5M2.5 12.5H13.5M2.5 14.5H13.5" stroke="#5e5e5e" stroke-width="1"/></svg>
<svg class="a" style="left:592px;top:98px;" width="17" height="18" viewBox="0 0 17 18"><path d="M3.5 1V16.5M1 3.8L3.5 1L6 3.8M1 13.7L3.5 16.5L6 13.7" fill="none" stroke="#3f78bd" stroke-width="1.2"/>
<path d="M8 4.5H15M8 7.5H15M8 10.5H15M8 13.5H15" stroke="#6e6e6e" stroke-width="1"/></svg>
<svg class="a" style="left:612.0px;top:106.0px;" width="5" height="3" viewBox="0 0 5 3"><path d="M0 0H5L2.5 3Z" fill="#777"/></svg>
<svg class="a" style="left:633px;top:98px;" width="18" height="18" viewBox="0 0 18 18"><path d="M3.2 9.2L8.2 3.2L13.2 8.2L8.2 14.2Z" fill="#fff" stroke="#6e6e6e" stroke-width="1"/>
<path d="M6.5 5V1.8A1.2 1.2 0 0 1 9 1.8V4" fill="none" stroke="#6e6e6e" stroke-width="1"/>
<path d="M13.4 6.5C15.6 7.6 16.6 9.6 15.6 12C14.8 10.4 13.6 9.6 12.2 9.6Z" fill="#3f78bd"/>
<rect x="1.5" y="14.5" width="15" height="3" fill="#fff" stroke="#8a8a8a" stroke-width="1"/></svg>
<svg class="a" style="left:656.0px;top:106.0px;" width="5" height="3" viewBox="0 0 5 3"><path d="M0 0H5L2.5 3Z" fill="#777"/></svg>
<svg class="a" style="left:668.5px;top:99.5px;" width="14" height="15" viewBox="0 0 14 15"><path d="M0.5 0.5H13.5M0.5 0.5V12M13.5 0.5V12M7 0.5V12M0.5 6.5H13.5" fill="none" stroke="#6e6e6e" stroke-width="1" stroke-dasharray="1 1" shape-rendering="crispEdges"/>
<path d="M0 13.5H14" stroke="#5e5e5e" stroke-width="1"/></svg>
<svg class="a" style="left:690.0px;top:106.0px;" width="5" height="3" viewBox="0 0 5 3"><path d="M0 0H5L2.5 3Z" fill="#777"/></svg>
<svg class="a" style="left:1176px;top:68px;" width="6" height="4" viewBox="0 0 6 4"><path d="M0 3.5L3 0L6 3.5Z" fill="#c6c6c6"/></svg>
<svg class="a" style="left:1176px;top:89px;" width="6" height="4" viewBox="0 0 6 4"><path d="M0 0H6L3 3.5Z" fill="#666"/></svg>
<svg class="a" style="left:1176px;top:106px;" width="6" height="7" viewBox="0 0 6 7"><path d="M0 0.5H6" stroke="#666"/><path d="M0 3H6L3 6.5Z" fill="#666"/></svg>
<svg class="a" style="left:1202px;top:61px;" width="16" height="14" viewBox="0 0 16 14"><path d="M0.5 13V7L2.5 2.6H5.5L6.6 5.4V13Z" fill="#5e5e5e"/><path d="M15.5 13V7L13.5 2.6H10.5L9.4 5.4V13Z" fill="#5e5e5e"/>
<rect x="2.6" y="0.5" width="2.8" height="2.4" fill="#5e5e5e"/><rect x="10.6" y="0.5" width="2.8" height="2.4" fill="#5e5e5e"/><rect x="6.4" y="5" width="3.2" height="3.6" fill="#5e5e5e"/>
<path d="M1.8 10.2H5.4M10.6 10.2H14.2" stroke="#fff" stroke-width="0.8"/></svg>
<svg class="a" style="left:1254.0px;top:67.0px;" width="5" height="3" viewBox="0 0 5 3"><path d="M0 0H5L2.5 3Z" fill="#777"/></svg>
<svg class="a" style="left:1201px;top:91px;" width="6" height="6" viewBox="0 0 6 6"><path d="M1 0.5V3.5H5M3.2 1.6L5.2 3.5L3.2 5.4" fill="none" stroke="#3f78bd" stroke-width="1"/></svg>
<svg class="a" style="left:1205px;top:105px;" width="11" height="17" viewBox="0 0 11 17"><path d="M1.5 1.2V13.2L4.4 10.6L6.4 15.4L8.2 14.6L6.2 10H10Z" fill="#fff" stroke="#5e5e5e" stroke-width="1"/></svg>
<svg class="a" style="left:1255.0px;top:113.0px;" width="5" height="3" viewBox="0 0 5 3"><path d="M0 0H5L2.5 3Z" fill="#777"/></svg>
<svg class="a" style="left:204px;top:168px;" width="10" height="6" viewBox="0 0 10 6"><path d="M0 0H9L4.5 5Z" fill="#777"/></svg>
<svg class="a" style="left:221px;top:165px;" width="10" height="10" viewBox="0 0 10 10"><path d="M0.8 0.8L9.2 9.2M9.2 0.8L0.8 9.2" stroke="#666" stroke-width="2.2"/></svg>
<svg class="a" style="left:196px;top:208px;" width="9" height="8" viewBox="0 0 9 8"><path d="M0.8 0.6L8.2 7.4M8.2 0.6L0.8 7.4" stroke="#6a6a6a" stroke-width="2"/></svg>
<svg class="a" style="left:215.0px;top:211.0px;" width="5" height="3" viewBox="0 0 5 3"><path d="M0 0H5L2.5 3Z" fill="#777"/></svg>
<svg class="a" style="left:196px;top:240px;" width="7" height="4" viewBox="0 0 7 4"><path d="M0 4L3.5 0L7 4Z" fill="#666"/></svg>
<svg class="a" style="left:213px;top:240.5px;" width="7" height="4" viewBox="0 0 7 4"><path d="M0 0H7L3.5 4Z" fill="#666"/></svg>
<svg class="a" style="left:253px;top:156px;" width="7" height="7" viewBox="0 0 7 7"><path d="M1 0V6H6.5" fill="none" stroke="#555" stroke-width="1.8"/></svg>
<svg class="a" style="left:1356px;top:154px;" width="7" height="4" viewBox="0 0 7 4"><path d="M0 4L3.5 0L7 4Z" fill="#777"/></svg>
<svg class="a" style="left:1356px;top:733px;" width="7" height="4" viewBox="0 0 7 4"><path d="M0 0H7L3.5 4Z" fill="#777"/></svg>
<svg class="a" style="left:292px;top:151px;" width="1034" height="12" viewBox="0 0 1034 12"><path d="M3.7 5.2V9.8M16.0 6.2V8.2M40.5 6.2V8.2M52.8 5.2V9.8M65.1 6.2V8.2M89.7 6.2V8.2M101.9 5.2V9.8M114.2 6.2V8.2M138.8 6.2V8.2M151.1 5.2V9.8M163.3 6.2V8.2M187.9 6.2V8.2M200.2 5.2V9.8M212.5 6.2V8.2M237.0 6.2V8.2M249.3 5.2V9.8M261.6 6.2V8.2M286.2 6.2V8.2M298.5 5.2V9.8M310.7 6.2V8.2M335.3 6.2V8.2M347.6 5.2V9.8M359.9 6.2V8.2M384.4 6.2V8.2M396.7 5.2V9.8M409.0 6.2V8.2M433.6 6.2V8.2M445.8 5.2V9.8M458.1 6.2V8.2M482.7 6.2V8.2M495.0 5.2V9.8M507.3 6.2V8.2M531.8 6.2V8.2M544.1 5.2V9.8M556.4 6.2V8.2M581.0 6.2V8.2M593.2 5.2V9.8M605.5 6.2V8.2M630.1 6.2V8.2M642.4 5.2V9.8M654.6 6.2V8.2M679.2 6.2V8.2M691.5 5.2V9.8M703.8 6.2V8.2M728.3 6.2V8.2M740.6 5.2V9.8M752.9 6.2V8.2M777.5 6.2V8.2M789.8 5.2V9.8M802.0 6.2V8.2M826.6 6.2V8.2M838.9 5.2V9.8M851.2 6.2V8.2M875.7 6.2V8.2M888.0 5.2V9.8M900.3 6.2V8.2M924.9 6.2V8.2M937.1 5.2V9.8M949.4 6.2V8.2M974.0 6.2V8.2M986.3 5.2V9.8M998.6 6.2V8.2M1023.1 6.2V8.2" stroke="#8a8a8a" stroke-width="1" fill="none"/></svg>
<svg class="a" style="left:414px;top:149px;" width="9" height="22" viewBox="0 0 9 22"><path d="M0.5 0.5H8.5V3L4.5 7.5L0.5 3Z" fill="#fff" stroke="#777" stroke-width="1"/>
<path d="M0.5 12V15.5H8.5V12L4.5 7.5L0.5 12Z" fill="#fff" stroke="#777" stroke-width="1"/>
<rect x="0.5" y="15.5" width="8" height="5.5" fill="#fff" stroke="#777" stroke-width="1"/></svg>
<svg class="a" style="left:1196px;top:155.5px;" width="10" height="8" viewBox="0 0 10 8"><path d="M0.5 7.5V5L5 0.6L9.5 5V7.5Z" fill="#fff" stroke="#777" stroke-width="1"/></svg>
<svg class="a" style="left:190px;top:748px;" width="15" height="14" viewBox="0 0 15 14"><path d="M0.5 0.5H6.5V12M0.5 0.5V10.5H6.5M6.5 0.5H13M6.5 10.5H13" fill="none" stroke="#fff" stroke-width="1"/>
<path d="M5 11.2L6.5 13L8 11.2Z" fill="#fff"/>
<path d="M9.2 4.2L13.6 9M13.6 4.2L9.2 9" stroke="#fff" stroke-width="1.5"/></svg>
<svg class="a" style="left:369px;top:747px;" width="15" height="15" viewBox="0 0 15 15"><rect x="2.5" y="2.5" width="11" height="11" fill="#1f4a8f" stroke="#fff" stroke-width="1"/>
<rect x="8" y="2" width="6" height="3" fill="#fff"/>
<path d="M4.5 9.5H6.5M7.5 9.5H9.5M10.5 9.5H12.5M4.5 11.5H6.5M7.5 11.5H9.5M10.5 11.5H12.5M7.5 7.5H9.5M10.5 7.5H12.5" stroke="#fff" stroke-width="1"/>
<circle cx="3.9" cy="4" r="3.4" fill="#1f4a8f"/><circle cx="3.9" cy="4" r="2.9" fill="#e8ecf4"/></svg>
<svg class="a" style="left:1077px;top:748px;" width="13" height="13" viewBox="0 0 13 13"><path d="M0.5 1.5L6 2.5V12L0.5 11Z M12.5 1.5L7 2.5V12L12.5 11Z" fill="none" stroke="#fff" stroke-width="1"/>
<path d="M2 4.3L5 4.9M2 6.3L5 6.9M2 8.3L5 8.9M11 4.3L8 4.9M11 6.3L8 6.9M11 8.3L8 8.9" stroke="#fff" stroke-width="1"/>
<path d="M6.5 2.5V13" stroke="#fff" stroke-width="1"/></svg>
<svg class="a" style="left:1115px;top:748px;" width="14" height="13" viewBox="0 0 14 13"><rect x="0.5" y="0.5" width="13" height="12" fill="none" stroke="#fff" stroke-width="1"/>
<path d="M2 2.5H12M2 4.5H12M2 6.5H12M2 8.5H12M2 10.5H12" stroke="#fff" stroke-width="1" shape-rendering="crispEdges"/></svg>
<svg class="a" style="left:1153px;top:748px;" width="15" height="14" viewBox="0 0 15 14"><rect x="0.5" y="0.5" width="10" height="11" fill="none" stroke="#fff" stroke-width="1"/>
<path d="M2 2.5H9M2 4.5H9M2 6.5H6M2 8.5H5.5" stroke="#fff" stroke-width="1" shape-rendering="crispEdges"/>
<circle cx="10.3" cy="9.3" r="3.7" fill="#fff" stroke="#2b579a" stroke-width="0.8"/>
<path d="M8.2 8.2C9.2 7.6 9.8 8.6 9.4 9.6S10 11.6 10.6 11.8M11.4 6.8C10.8 7.8 11.6 8.6 12.8 8.6" stroke="#2b579a" stroke-width="1.1" fill="none"/></svg>
<svg class="a" style="left:1298px;top:750px;" width="9" height="9" viewBox="0 0 9 9"><path d="M4.5 0.5V8.5M0.5 4.5H8.5" stroke="#fff" stroke-width="2"/></svg>
</div></body></html>
